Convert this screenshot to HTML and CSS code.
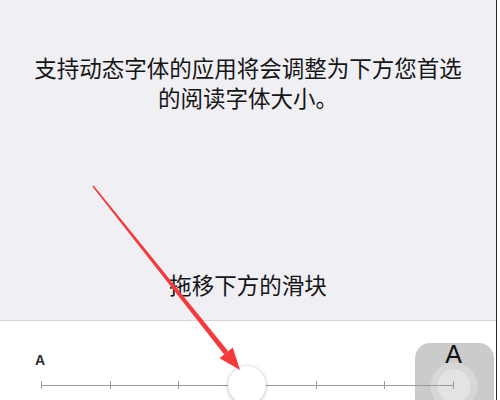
FILE: index.html
```html
<!DOCTYPE html>
<html lang="zh-CN">
<head>
    <meta charset="UTF-8">
    <meta name="viewport" content="width=device-width, initial-scale=1.0">
    <title>文字大小</title>
    <link rel="stylesheet" href="styles.css">
</head>
<body>
    <div class="screen">
        <div class="info">
            <p class="desc">支持动态字体的应用将会调整为下方您首选的阅读字体大小。</p>
            <p class="hint">拖移下方的滑块</p>
        </div>
        <div class="adjust">
            <div class="bubble"></div>
            <div class="labels">
                <span class="a-small">A</span>
                <span class="a-large">A</span>
            </div>
            <div class="track">
                <span class="tick"></span>
                <span class="tick"></span>
                <span class="tick"></span>
                <span class="tick"></span>
                <span class="tick"></span>
                <span class="tick"></span>
                <span class="tick"></span>
                <span class="thumb"></span>
            </div>
        </div>
    </div>
    <!-- red annotation arrow -->
    <svg class="arrow" width="500" height="400" viewBox="0 0 500 400">
        <polygon points="92.4,186.5 93.6,185.5 228.2,351.3 224.2,354.5" fill="#f43a3a"/>
        <polygon points="219.6,358.2 232.8,347.6 240,370" fill="#f43a3a"/>
    </svg>
</body>
</html>
```

FILE: styles.css
```css
html, body {
    margin: 0;
    padding: 0;
}
body {
    width: 500px;
    height: 400px;
    overflow: hidden;
    background: #fff;
    position: relative;
    font-family: "Noto Sans CJK SC", "Liberation Sans", sans-serif;
    color: #151515;
}
.screen {
    width: 496px;
    height: 400px;
    border-right: 1px solid #2b2b2b;
}
.info {
    box-sizing: border-box;
    height: 321px;
    background: #efeff4;
    border-bottom: 1px solid #d6d6da;
    display: flex;
    flex-direction: column;
    align-items: center;
    padding: 52px 0 21px;
}
.desc, .hint {
    margin: 0;
    font-size: 22.5px;
    line-height: 30px;
    text-align: center;
}
.desc {
    width: 430px;
}
.hint {
    margin-top: auto;
}
.adjust {
    position: relative;
    height: 79px;
    padding: 21px 34px 0 35px;
    box-sizing: border-box;
}
.bubble {
    position: absolute;
    left: 415px;
    top: 22px;
    width: 79px;
    height: 57px;
    border-radius: 15px 15px 0 0;
    background: radial-gradient(circle at 39px 43px, #e3e3e3 0 16px, #d7d7d7 17px 23px, #cbcbcb 24px);
}
.labels {
    position: relative;
    display: flex;
    justify-content: space-between;
    align-items: flex-end;
    height: 25px;
    font-family: "Liberation Sans", sans-serif;
    color: #111;
}
.a-small {
    font-size: 14px;
    line-height: 14px;
    font-weight: bold;
    color: #2a2a2a;
}
.a-large {
    font-size: 25px;
    line-height: 25px;
}
.track {
    position: relative;
    margin: 14px 8px 0 6px;
    height: 8px;
    display: flex;
    justify-content: space-between;
    background: linear-gradient(#9c9c9c, #9c9c9c) 0 50% / 100% 1px no-repeat;
}
.tick {
    width: 1px;
    background: #9c9c9c;
}
.thumb {
    position: absolute;
    left: calc(50% - 20px);
    top: -15px;
    width: 38px;
    height: 38px;
    border-radius: 50%;
    background: #fff;
    box-shadow: 0 1px 4px rgba(0, 0, 0, 0.25), 0 0 1px rgba(0, 0, 0, 0.15);
}
.arrow {
    position: absolute;
    top: 0;
    left: 0;
    pointer-events: none;
}
```
